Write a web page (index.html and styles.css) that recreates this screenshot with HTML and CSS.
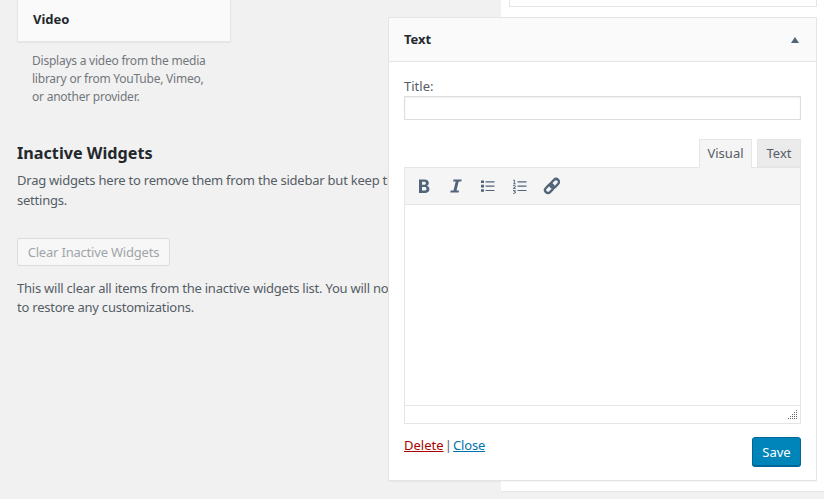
FILE: index.html
```html
<!DOCTYPE html>
<html lang="en">
<head>
<meta charset="utf-8">
<title>Widgets</title>
<link rel="stylesheet" href="styles.css">
</head>
<body>
<div class="page">
  <main class="left">
    <div class="widget-card"><h3 class="widget-name">Video</h3></div>
    <p class="widget-desc">Displays a video from the media library or from YouTube, Vimeo, or another provider.</p>
    <h2 class="inactive-title">Inactive Widgets</h2>
    <p class="inactive-text">Drag widgets here to remove them from the sidebar but keep their settings.</p>
    <button class="clear-btn" type="button">Clear Inactive Widgets</button>
    <p class="inactive-note">This will clear all items from the inactive widgets list. You will not be able to restore any customizations.</p>
  </main>
  <aside class="right">
    <div class="right-box"></div>
  </aside>
</div>
<section class="popup">
  <header class="popup-head">
    <h3 class="popup-title">Text</h3>
    <svg class="popup-arrow" width="8" height="6" viewBox="0 0 8 6"><path d="M4 0 8 6H0z"/></svg>
  </header>
  <div class="popup-body">
    <label class="field-label" for="title">Title:</label>
    <input class="field-input" id="title" type="text">
    <div class="tabs">
      <span class="tab tab-active">Visual</span>
      <span class="tab">Text</span>
    </div>
    <div class="editor">
      <div class="toolbar">
        <svg class="tool" width="20" height="20" viewBox="0 0 20 20"><path d="M5 3.500h5.600c2.700 0 4.200 1.300 4.200 3.400 0 1.400-.8 2.500-2.100 2.900 1.700.4 2.700 1.600 2.700 3.200 0 2.500-1.800 3.900-4.700 3.900H5zM8 5.800v3h2.200c1.100 0 1.700-.6 1.700-1.500S11.300 5.800 10.200 5.800zM8 11v3.600h2.500c1.300 0 2-.6 2-1.800S11.800 11 10.500 11z" fill-rule="evenodd"/></svg>
        <svg class="tool" width="20" height="20" viewBox="0 0 20 20"><path d="M7.500 3.500h8.200l-.4 2h-2.600L10.500 14.500h2.500l-.4 2.100H4.300l.4-2.100h2.800L9.700 5.500H7.100z"/></svg>
        <svg class="tool" width="20" height="20" viewBox="0 0 20 20"><path d="M3 4.500h3v2.600H3zM3 8.800h3v2.600H3zM3 13.200h3v2.600H3zM7.500 5.200h9v1.200h-9zM7.500 9.500h9v1.200h-9zM7.500 13.900h9v1.200h-9z"/></svg>
        <svg class="tool" width="20" height="20" viewBox="0 0 20 20"><path d="M7.500 5.200h9v1.200h-9zM7.500 9.500h9v1.200h-9zM7.500 13.900h9v1.200h-9zM3.500 3.800h1.300v3.600h1v.8H3V7.400h.9V4.700L3.200 5zM3 9.600c.5-.4 2.800-.7 2.800.8 0 .8-1.200 1.300-1.600 1.800h1.700v.8H3v-.8c.5-.7 1.800-1.300 1.800-1.800 0-.5-1.100-.3-1.800 0zM3 14.100c.8-.3 2.800-.4 2.800.8 0 .4-.2.600-.6.800.4.100.7.400.7.900 0 1.300-2.200 1.200-2.900.9v-.8c.6.300 1.800.3 1.800-.2 0-.4-.7-.4-1.100-.4v-.7c.4 0 1-.1 1-.4 0-.4-1-.3-1.700 0z"/></svg>
        <svg class="tool tool-link" width="18" height="18" viewBox="0 0 18 18"><g transform="rotate(-45 9 9)"><rect x="0.400" y="6.100" width="9.800" height="5.800" rx="2.900"/><rect x="7.800" y="6.100" width="9.800" height="5.800" rx="2.900"/></g></svg>
      </div>
      <div class="edit-area"></div>
      <div class="status-bar">
        <svg class="grip" width="10" height="10" viewBox="0 0 10 10"><path d="M8 0h1v1H8zM6 2h1v1H6zM8 2h1v1H8zM4 4h1v1H4zM6 4h1v1H6zM8 4h1v1H8zM2 6h1v1H2zM4 6h1v1H4zM6 6h1v1H6zM8 6h1v1H8zM0 8h1v1H0zM2 8h1v1H2zM4 8h1v1H4zM6 8h1v1H6zM8 8h1v1H8z"/></svg>
      </div>
    </div>
    <div class="actions">
      <div class="links"><a class="link-delete" href="#">Delete</a> | <a class="link-close" href="#">Close</a></div>
      <button class="save-btn" type="button">Save</button>
    </div>
  </div>
</section>
</body>
</html>
```
FILE: styles.css
```css
* { box-sizing: border-box; }
html, body { margin: 0; height: 100%; }
body {
  background: #f1f1f1;
  color: #444;
  font-family: "Noto Sans", "Open Sans", sans-serif;
  font-size: 13px;
  line-height: 19.5px;
  overflow: hidden;
  position: relative;
}
.page { display: flex; align-items: flex-start; height: 499px; }
.left { width: 501px; flex: none; padding: 0 0 0 17px; overflow: hidden; height: 100%; }
.widget-card {
  width: 214px;
  height: 42px;
  background: #fafafa;
  border: 1px solid #e5e5e5;
  border-top: 0;
  box-shadow: 0 1px 1px rgba(0,0,0,.04);
  padding: 10px 15px 0;
}
.widget-name { margin: 0; font-size: 13px; line-height: 19px; font-weight: 700; color: #23282d; }
.widget-desc { margin: 0; padding: 10px 15px 0; width: 214px; font-size: 12px; line-height: 18px; color: #72777c; letter-spacing: -.23px; }
.inactive-title { margin: 36px 0 0; font-size: 16.2px; line-height: 22px; font-weight: 700; color: #23282d; }
.inactive-text { margin: 7px 0 0; width: 428px; color: #555d66; letter-spacing: -.23px; }
.clear-btn {
  display: block;
  margin: 28px 0 0;
  width: 153px;
  height: 28px;
  padding: 0;
  background: #f7f7f7;
  border: 1px solid #ddd;
  border-radius: 3px;
  color: #a0a5aa;
  font: 13px/26px "Noto Sans", sans-serif;
  letter-spacing: -.2px;
}
.inactive-note { margin: 13px 0 0; width: 428px; color: #555d66; letter-spacing: -.23px; line-height: 19px; }
.right { flex: 1; height: 491px; background: #fff; box-shadow: 0 1px 1px rgba(0,0,0,.04); padding-left: 8px; padding-right: 7px; }
.right-box { height: 7px; border: 1px solid #e5e5e5; border-top: 0; background: #fff; }
.popup {
  position: absolute;
  left: 388px;
  top: 17px;
  width: 429px;
  height: 464px;
  background: #fff;
  border: 1px solid #e5e5e5;
  box-shadow: 0 1px 1px rgba(0,0,0,.04);
}
.popup-head {
  display: flex;
  align-items: center;
  justify-content: space-between;
  height: 44px;
  padding: 0 17px 0 15px;
  background: #fafafa;
  border-bottom: 1px solid #e5e5e5;
}
.popup-title { margin: 0; font-size: 13px; line-height: 19px; font-weight: 700; color: #23282d; }
.popup-arrow { fill: #50647a; display: block; }
.popup-body { padding: 15px 15px 0; }
.field-label { display: block; line-height: 19px; color: #555d66; }
.field-input {
  display: block;
  width: 397px;
  height: 24px;
  margin: 0;
  padding: 0;
  background: #fff;
  border: 1px solid #ddd;
  box-shadow: inset 0 1px 2px rgba(0,0,0,.07);
  outline: 0;
}
.tabs { display: flex; justify-content: flex-end; gap: 5px; margin-top: 19px; width: 397px; height: 29px; }
.tab {
  width: 44px;
  height: 28px;
  background: #ebebeb;
  border: 1px solid #e5e5e5;
  color: #555d66;
  text-align: center;
  line-height: 27px;
}
.tab-active {
  width: 53px;
  height: 29px;
  background: #f5f5f5;
  border-bottom-color: #f5f5f5;
  position: relative;
  z-index: 1;
}
.editor { width: 397px; margin-top: -1px; }
.toolbar {
  display: flex;
  align-items: center;
  gap: 12px;
  height: 38px;
  padding: 0 0 0 9px;
  background: #f5f5f5;
  border: 1px solid #e5e5e5;
}
.tool { fill: #50647a; display: block; flex: none; }
.tool-link { fill: none; stroke: #50647a; stroke-width: 2.4; margin-left: 1px; }
.edit-area { height: 200px; background: #fff; border-left: 1px solid #e5e5e5; border-right: 1px solid #e5e5e5; }
.status-bar {
  display: flex;
  justify-content: flex-end;
  align-items: flex-end;
  height: 19px;
  padding: 0 2px 3px 0;
  border: 1px solid #e5e5e5;
  background: #fff;
}
.grip { fill: #666; display: block; }
.actions { display: flex; justify-content: space-between; align-items: flex-start; margin-top: 13px; width: 397px; }
.links { line-height: 19px; margin-top: -1px; color: #555d66; word-spacing: -2.2px; }
.link-delete { color: #a00; }
.link-close { color: #0073aa; letter-spacing: -.2px; }
.save-btn {
  width: 49px;
  height: 29px;
  padding: 0;
  background: #0085ba;
  border: 1px solid #006799;
  border-radius: 3px;
  box-shadow: 0 1px 0 #006799;
  color: #fff;
  font: 13px/26px "Noto Sans", sans-serif;
}
```
